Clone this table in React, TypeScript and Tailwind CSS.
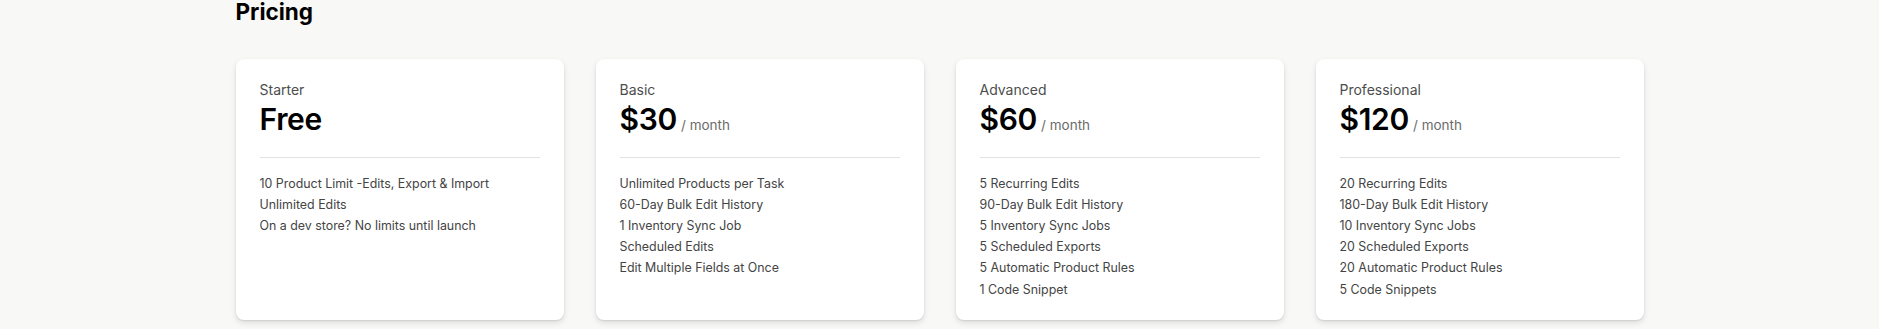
import React from "react";

type Plan = {
  name: string;
  price: string;
  monthly: boolean;
  features: string[];
};

const plans: Plan[] = [
  {
    name: "Starter",
    price: "Free",
    monthly: false,
    features: [
      "10 Product Limit -Edits, Export & Import",
      "Unlimited Edits",
      "On a dev store? No limits until launch",
    ],
  },
  {
    name: "Basic",
    price: "$30",
    monthly: true,
    features: [
      "Unlimited Products per Task",
      "60-Day Bulk Edit History",
      "1 Inventory Sync Job",
      "Scheduled Edits",
      "Edit Multiple Fields at Once",
    ],
  },
  {
    name: "Advanced",
    price: "$60",
    monthly: true,
    features: [
      "5 Recurring Edits",
      "90-Day Bulk Edit History",
      "5 Inventory Sync Jobs",
      "5 Scheduled Exports",
      "5 Automatic Product Rules",
      "1 Code Snippet",
    ],
  },
  {
    name: "Professional",
    price: "$120",
    monthly: true,
    features: [
      "20 Recurring Edits",
      "180-Day Bulk Edit History",
      "10 Inventory Sync Jobs",
      "20 Scheduled Exports",
      "20 Automatic Product Rules",
      "5 Code Snippets",
    ],
  },
];

function PlanCard({ plan }: { plan: Plan }) {
  return (
    <div className="bg-white rounded-lg shadow-[0_1px_2px_rgba(0,0,0,0.1),0_3px_6px_rgba(0,0,0,0.1)] px-6 pt-[21px] pb-[20px] flex flex-col">
      <div className="text-sm leading-5 text-[#4d4d4d]">{plan.name}</div>
      <div className="flex items-baseline gap-1 mt-[1px]">
        <span className="text-[30px] leading-9 font-semibold text-black tracking-[-0.01em]">
          {plan.price}
        </span>
        {plan.monthly && (
          <span className="text-[13.5px] leading-5 text-[#6b6b6b]">/ month</span>
        )}
      </div>
      <div className="h-px bg-[#e3e3e3] mt-[20px] mb-[15px]" />
      <ul className="flex flex-col">
        {plan.features.map((f) => (
          <li key={f} className="text-[12.4px] leading-[21.2px] text-[#444444]">
            {f}
          </li>
        ))}
      </ul>
    </div>
  );
}

export default function App() {
  return (
    <div
      className="min-h-[329px] bg-[#f8f8f7] antialiased"
      style={{ fontFamily: "Inter, 'Noto Sans', sans-serif" }}
    >
      <div className="w-[1408px] mx-auto">
        <h2 className="text-[22.5px] leading-none font-bold text-black pt-[1px]">Pricing</h2>
        <div className="grid grid-cols-4 gap-8 mt-[35px]">
          {plans.map((p) => (
            <PlanCard key={p.name} plan={p} />
          ))}
        </div>
      </div>
    </div>
  );
}
